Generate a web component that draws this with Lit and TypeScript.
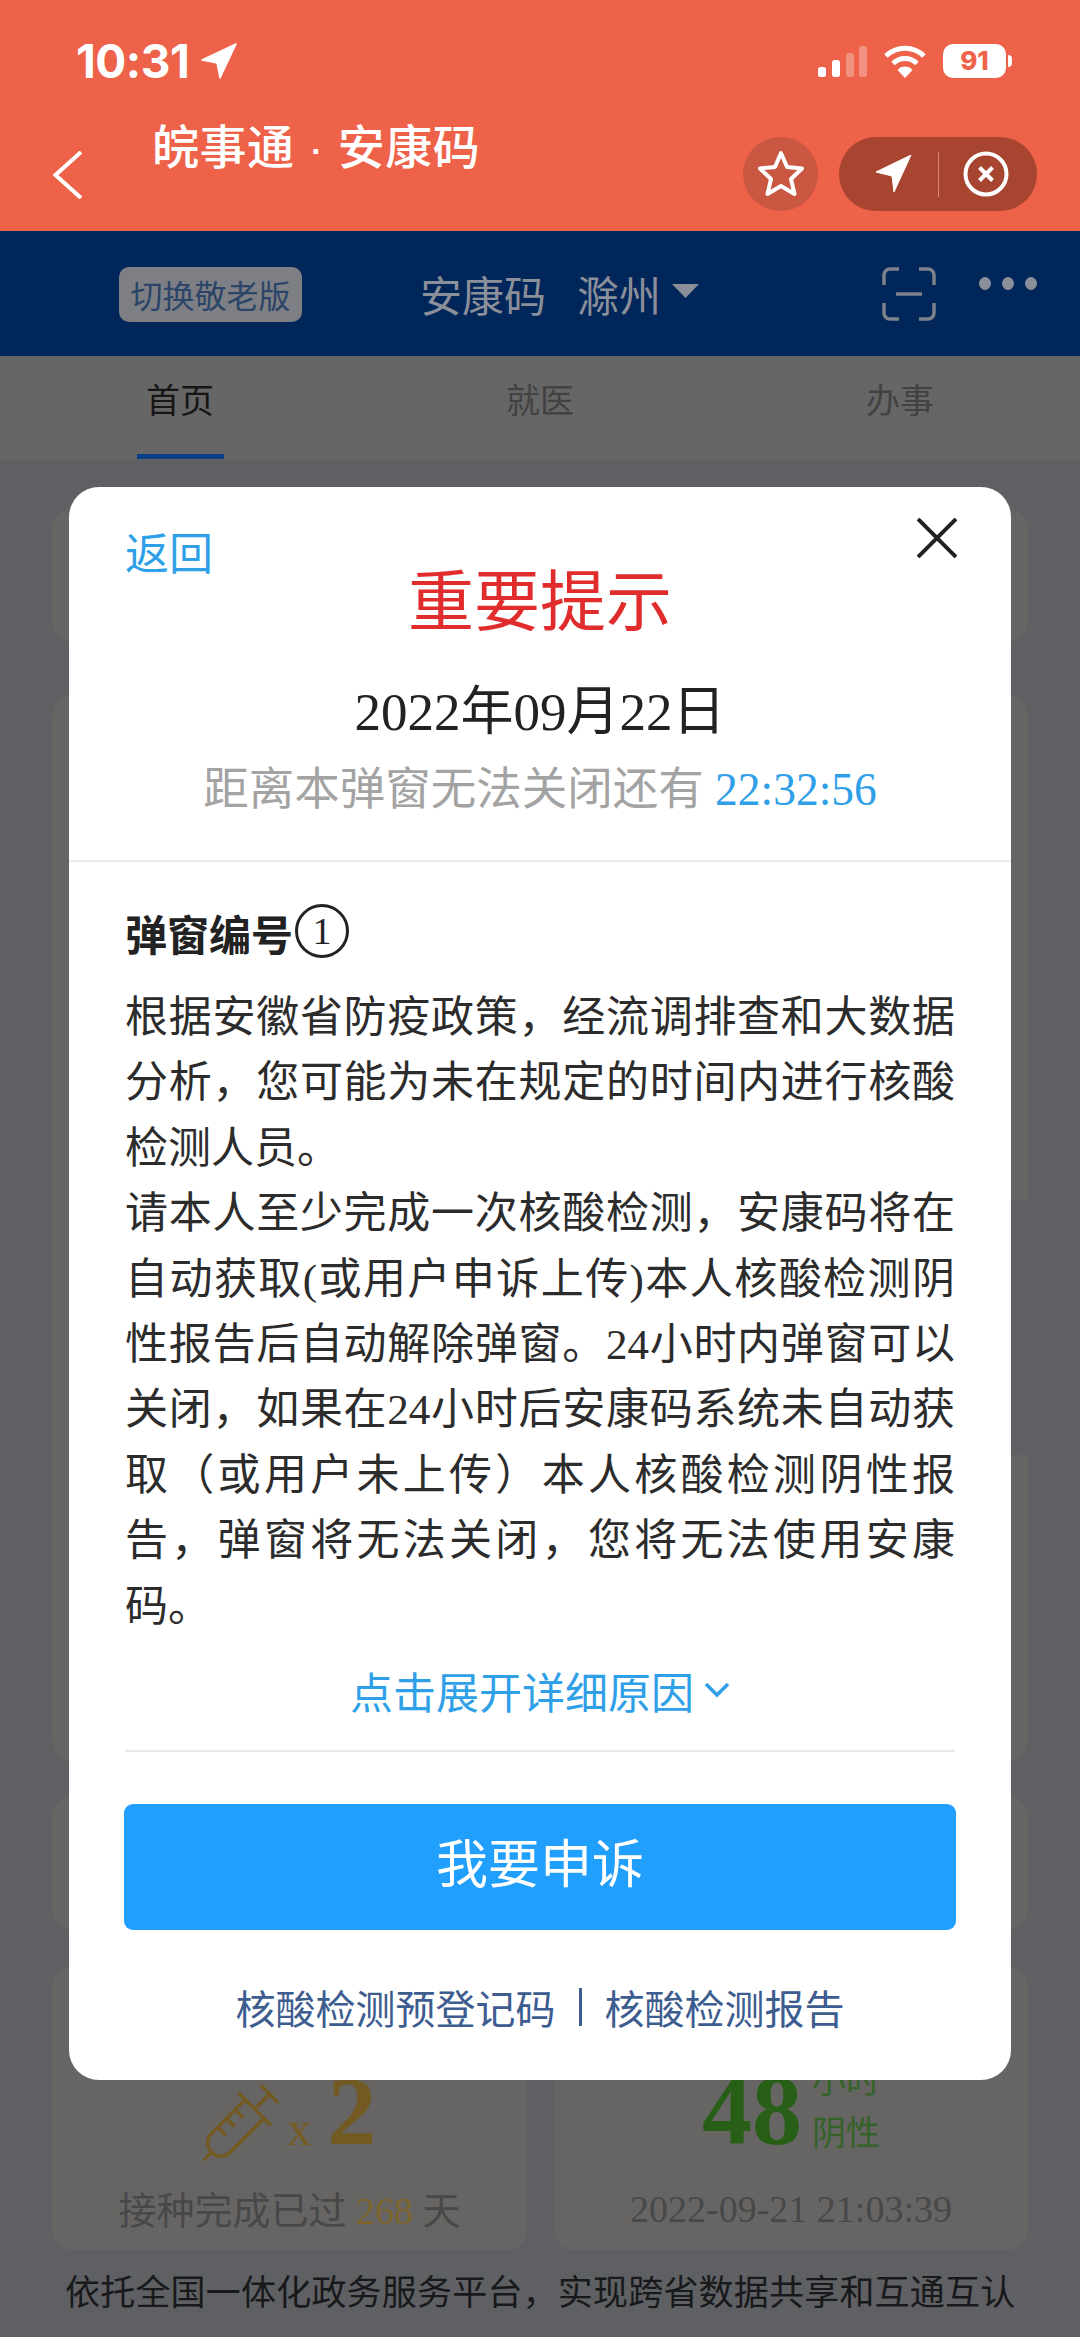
import {LitElement, css, html} from 'lit';
import {customElement} from 'lit/decorators.js';

const CJK = css`"Noto Sans CJK SC", sans-serif`;

@customElement('app-root')
export class AppRoot extends LitElement {
  static styles = css`
    :host {
      display: block;
      position: relative;
      width: 1080px;
      height: 2337px;
      overflow: hidden;
      background: #5f6063;
      font-family: ${CJK};
    }
    svg {
      display: block;
      flex: none;
    }

    /* orange system header */
    .top {
      height: 231px;
      background: #ee6249;
      color: #fff;
    }
    .status {
      display: flex;
      align-items: center;
      height: 122px;
      padding: 0 68px 0 76px;
      box-sizing: border-box;
    }
    .time {
      font: 700 46px/44px Inter, sans-serif;
      letter-spacing: -0.5px;
      width: 125px;
    }
    .sys {
      display: flex;
      align-items: center;
      margin-left: auto;
    }
    .battery {
      width: 63px;
      height: 34px;
      border-radius: 10px;
      background: #fff;
      color: #ee6249;
      font: 800 26px/34px Inter, sans-serif;
      text-align: center;
      margin-left: 16px;
    }
    .nub {
      width: 4px;
      height: 12px;
      margin-left: 2px;
      background: #fff;
      border-radius: 0 4px 4px 0;
    }
    .nav {
      display: flex;
      align-items: flex-start;
      height: 109px;
      padding: 0 43px 0 53px;
    }
    .back {
      margin-top: 29px;
    }
    .app-title {
      margin: -8px 0 0 69px;
      font: 500 47px/68px "Liberation Sans", ${CJK};
      letter-spacing: 0.5px;
      white-space: pre;
    }
    .star {
      display: flex;
      align-items: center;
      justify-content: center;
      width: 75px;
      height: 74px;
      margin: 15px 21px 0 auto;
      border-radius: 50%;
      background: #c95741;
    }
    .pill {
      display: flex;
      align-items: center;
      width: 198px;
      height: 74px;
      margin-top: 15px;
      border-radius: 37px;
      background: #a84531;
    }
    .pill-arrow {
      margin-left: 37px;
    }
    .pill-line {
      width: 1px;
      height: 45px;
      margin-left: 26px;
      background: #d98a78;
    }
    .pill-close {
      margin-left: 24px;
    }

    /* blue app bar */
    .bar {
      display: flex;
      align-items: center;
      height: 125px;
      padding-left: 119px;
      background: #00265a;
      color: #8b8f99;
    }
    .switch {
      width: 183px;
      height: 55px;
      margin-top: 2px;
      border-radius: 10px;
      background: #7d7f84;
      color: #2c4467;
      font-size: 32px;
      line-height: 54px;
      text-align: center;
    }
    .bar-title {
      margin-left: 118px;
      font-size: 42px;
      line-height: 60px;
    }
    .city {
      margin-left: 31px;
      font-size: 42px;
      line-height: 60px;
    }
    .caret {
      margin: 0 0 5px 11px;
    }
    .scan {
      margin-left: 183px;
    }
    .dots {
      display: flex;
      gap: 11px;
      margin: -20px 0 0 43px;
    }
    .dots i {
      width: 12px;
      height: 13px;
      border-radius: 50%;
      background: #8b8f99;
    }

    /* tabs */
    .tabs {
      display: flex;
      height: 104px;
      background: #666;
    }
    .tab {
      flex: 1;
      display: flex;
      flex-direction: column;
      align-items: center;
      padding-top: 19px;
      box-sizing: border-box;
      color: #424242;
      font-size: 34px;
      line-height: 48px;
    }
    .tab.on {
      color: #161616;
    }
    .tab.on::after {
      content: "";
      width: 87px;
      height: 5px;
      margin-top: auto;
      margin-bottom: 1px;
      background: #0b3f86;
    }

    /* dimmed page content */
    .page {
      display: flex;
      flex-direction: column;
      padding: 49px 52px 0;
    }
    .card {
      background: #666564;
      border-radius: 20px;
    }
    .c1 {
      height: 133px;
    }
    .c2 {
      margin-top: 53px;
    }
    .c2-top {
      height: 505px;
      background: #666564;
      border-radius: 20px 20px 0 0;
    }
    .c2-mid {
      width: 300px;
      height: 255px;
      background: #666564;
    }
    .c2-bottom {
      height: 306px;
      background: #666564;
      border-radius: 0 0 20px 20px;
    }
    .c4 {
      height: 133px;
      margin-top: 36px;
    }
    .pair {
      display: grid;
      grid-template-columns: 475px 474px;
      justify-content: space-between;
      margin-top: 36px;
    }
    .stat {
      display: flex;
      flex-direction: column;
      align-items: center;
      height: 284px;
      box-sizing: border-box;
      color: #484848;
    }
    .stat-row {
      display: flex;
      align-items: flex-end;
      height: 186px;
    }
    .syringe {
      margin-bottom: -9px;
      margin-right: 9px;
    }
    .times {
      color: #755c24;
      font: 48px/1 "Liberation Serif", serif;
      margin-right: 16px;
      margin-bottom: -1px;
    }
    .two {
      color: #725a22;
      font: 700 98px/1 "Liberation Serif", serif;
      margin-bottom: -8px;
    }
    .days {
      margin-top: 27px;
      font: 38px/64px "Liberation Serif", ${CJK};
      white-space: pre;
    }
    .days b {
      color: #7d672e;
      font-weight: 400;
    }
    .days.stamp {
      margin-top: 25px;
    }
    .hours {
      color: #275f17;
      font: 700 100px/1 "Liberation Serif", serif;
      margin-bottom: -8px;
    }
    .hours-side {
      margin: 0 0 -5px 10px;
      color: #356327;
      font-size: 34px;
      line-height: 52px;
    }
    .footer {
      margin-top: 15px;
      margin-left: 13px;
      color: #18191b;
      font-size: 35px;
      line-height: 50px;
      white-space: nowrap;
      letter-spacing: 0.2px;
    }

    /* modal over the page */
    .modal {
      position: absolute;
      top: 487px;
      left: 69px;
      width: 942px;
      height: 1593px;
      border-radius: 30px;
      background: #fff;
      font-family: "Liberation Serif", ${CJK};
    }
    .modal-head {
      height: 375px;
      box-sizing: border-box;
      padding-top: 76px;
      border-bottom: 2px solid #ececec;
      text-align: center;
    }
    .modal-back {
      position: absolute;
      top: 39px;
      left: 56px;
      color: #2f9fe8;
      font-size: 44px;
      line-height: 60px;
    }
    .modal-close {
      position: absolute;
      top: 31px;
      left: 848px;
    }
    .modal-title {
      color: #e02c2c;
      font-size: 66px;
      line-height: 80px;
    }
    .modal-date {
      margin-top: 34px;
      color: #222;
      font-size: 53px;
      line-height: 70px;
    }
    .modal-count {
      margin-top: 13px;
      color: #a3a3a3;
      font-size: 45.5px;
      line-height: 60px;
      white-space: pre;
    }
    .modal-count span {
      color: #2f9fe8;
    }
    .modal-body {
      padding: 40px 56px 0;
    }
    .code {
      display: flex;
      align-items: center;
      height: 60px;
      color: #222;
      font-size: 42px;
      font-weight: 700;
    }
    .code-num {
      display: flex;
      align-items: center;
      justify-content: center;
      width: 48px;
      height: 48px;
      margin: -2px 0 0 2px;
      border: 3px solid #222;
      border-radius: 50%;
      font-size: 38px;
      font-weight: 400;
      line-height: 1;
    }
    .notice {
      margin-top: 23px;
      color: #2c2c2c;
      font-size: 43px;
      line-height: 65.4px;
      text-align: justify;
    }
    .expand {
      display: flex;
      align-items: center;
      justify-content: center;
      height: 60px;
      margin-top: 21px;
      color: #2f9fe8;
      font-size: 43px;
    }
    .expand svg {
      margin-left: 10px;
    }
    .rule {
      height: 2px;
      margin-top: 30px;
      background: #e9e9e9;
    }
    .appeal {
      height: 126px;
      margin: 52px -1px 0;
      border-radius: 9px;
      background: #219ffd;
      color: #fff;
      font-size: 52px;
      line-height: 124px;
      text-align: center;
    }
    .links {
      display: flex;
      justify-content: center;
      align-items: center;
      height: 60px;
      margin-top: 47px;
      color: #3d5c8f;
      font-size: 40px;
    }
    .links i {
      width: 3px;
      height: 38px;
      margin: 0 23px;
      background: #3d5c8f;
    }
  `;

  render() {
    return html`
      <header class="top">
        <div class="status">
          <span class="time">10:31</span>
          <svg width="36" height="36" viewBox="0 0 36 36">
            <path d="M35 1 L1 17 L16 20 L19 35 Z" fill="#fff" stroke="#fff" stroke-width="1.5" stroke-linejoin="round" />
          </svg>
          <div class="sys">
            <svg width="50" height="31" viewBox="0 0 50 31">
              <rect x="0" y="21" width="8" height="10" rx="2.5" fill="#fff" />
              <rect x="14" y="14" width="8" height="17" rx="2.5" fill="#fff" />
              <rect x="28" y="7" width="8" height="24" rx="2.5" fill="#fff" fill-opacity=".3" />
              <rect x="41" y="0" width="8" height="31" rx="2.5" fill="#fff" fill-opacity=".3" />
            </svg>
            <svg style="margin-left:15px" width="44" height="33" viewBox="0 0 44 33" fill="none" stroke="#fff" stroke-width="5">
              <path d="M3 11 A27 27 0 0 1 41 11" />
              <path d="M10 18.5 A17 17 0 0 1 34 18.5" />
              <path d="M22 33 L14.5 25 A10 10 0 0 1 29.5 25 Z" fill="#fff" stroke="none" />
            </svg>
            <span class="battery">91</span>
            <span class="nub"></span>
          </div>
        </div>
        <div class="nav">
          <svg class="back" width="30" height="48" viewBox="0 0 30 48" fill="none" stroke="#fff" stroke-width="4">
            <path d="M28 1 L2.5 24 L28 47" />
          </svg>
          <div class="app-title">皖事通 · 安康码</div>
          <div class="star">
            <svg width="50" height="50" viewBox="0 0 50 50" fill="none" stroke="#fff" stroke-width="4" stroke-linejoin="round">
              <path d="M25 4 L31 18 L46 19.5 L35 30 L38.5 45 L25 37 L11.5 45 L15 30 L4 19.5 L19 18 Z" />
            </svg>
          </div>
          <div class="pill">
            <svg class="pill-arrow" width="36" height="38" viewBox="0 0 36 38">
              <path d="M35 0 L0 17 L16 21 L18 37 Z" fill="#fff" stroke="#fff" stroke-linejoin="round" />
            </svg>
            <span class="pill-line"></span>
            <svg class="pill-close" width="46" height="46" viewBox="0 0 46 46" fill="none" stroke="#fff">
              <circle cx="23" cy="23" r="20.5" stroke-width="4" />
              <path d="M16.5 16.5 L29.5 29.5 M29.5 16.5 L16.5 29.5" stroke-width="4" />
            </svg>
          </div>
        </div>
      </header>

      <div class="bar">
        <span class="switch">切换敬老版</span>
        <span class="bar-title">安康码</span>
        <span class="city">滁州</span>
        <svg class="caret" width="27" height="14" viewBox="0 0 27 14"><path d="M0 0 H27 L13.5 14 Z" fill="#8b8f99" /></svg>
        <svg class="scan" width="54" height="54" viewBox="0 0 54 54" fill="none" stroke="#7d818a" stroke-width="3.5">
          <path d="M2 18 V8 A6 6 0 0 1 8 2 H17 M37 2 H46 A6 6 0 0 1 52 8 V18" />
          <path d="M2 36 V46 A6 6 0 0 0 8 52 H17 M37 52 H46 A6 6 0 0 0 52 46 V36" />
          <path d="M14 27 H40" />
        </svg>
        <span class="dots"><i></i><i></i><i></i></span>
      </div>

      <nav class="tabs">
        <div class="tab on">首页</div>
        <div class="tab">就医</div>
        <div class="tab">办事</div>
      </nav>

      <main class="page">
        <div class="card c1"></div>
        <div class="c2">
          <div class="c2-top"></div>
          <div class="c2-mid"></div>
          <div class="c2-bottom"></div>
        </div>
        <div class="card c4"></div>
        <div class="pair">
          <div class="card stat">
            <div class="stat-row">
              <svg class="syringe" width="76" height="76" viewBox="-1 -8 86 86" fill="none" stroke="#725a22" stroke-width="4">
                <g transform="rotate(45 39 39)">
                  <path d="M24 -12 H52 M38 -12 V12" />
                  <path d="M12 12 H64" />
                  <path d="M23 12 V66 A15 15 0 0 0 53 66 V12" />
                  <path d="M38 81 V94" />
                  <path d="M23 28 H36 M23 42 H36 M23 56 H36" />
                </g>
              </svg>
              <span class="times">x</span>
              <span class="two">2</span>
            </div>
            <div class="days">接种完成已过 <b>268</b> 天</div>
          </div>
          <div class="card stat">
            <div class="stat-row">
              <span class="hours">48</span>
              <div class="hours-side">小时<br />阴性</div>
            </div>
            <div class="days stamp">2022-09-21 21:03:39</div>
          </div>
        </div>
        <div class="footer">依托全国一体化政务服务平台，实现跨省数据共享和互通互认</div>
      </main>

      <section class="modal">
        <div class="modal-head">
          <div class="modal-title">重要提示</div>
          <div class="modal-date">2022年09月22日</div>
          <div class="modal-count">距离本弹窗无法关闭还有 <span>22:32:56</span></div>
        </div>
        <span class="modal-back">返回</span>
        <svg class="modal-close" width="40" height="40" viewBox="0 0 40 40" fill="none" stroke="#222" stroke-width="4">
          <path d="M1 1 L39 39 M39 1 L1 39" />
        </svg>
        <div class="modal-body">
          <div class="code">弹窗编号<span class="code-num">1</span></div>
          <div class="notice">
            <div>根据安徽省防疫政策，经流调排查和大数据分析，您可能为未在规定的时间内进行核酸检测人员。</div>
            <div>请本人至少完成一次核酸检测，安康码将在自动获取(或用户申诉上传)本人核酸检测阴性报告后自动解除弹窗。24小时内弹窗可以关闭，如果在24小时后安康码系统未自动获取（或用户未上传）本人核酸检测阴性报告，弹窗将无法关闭，您将无法使用安康码。</div>
          </div>
          <div class="expand">
            点击展开详细原因
            <svg width="26" height="16" viewBox="0 0 26 16" fill="none" stroke="#2f9fe8" stroke-width="3.5">
              <path d="M2 2 L13 13 L24 2" />
            </svg>
          </div>
          <div class="rule"></div>
          <div class="appeal">我要申诉</div>
          <div class="links">核酸检测预登记码<i></i>核酸检测报告</div>
        </div>
      </section>
    `;
  }
}
